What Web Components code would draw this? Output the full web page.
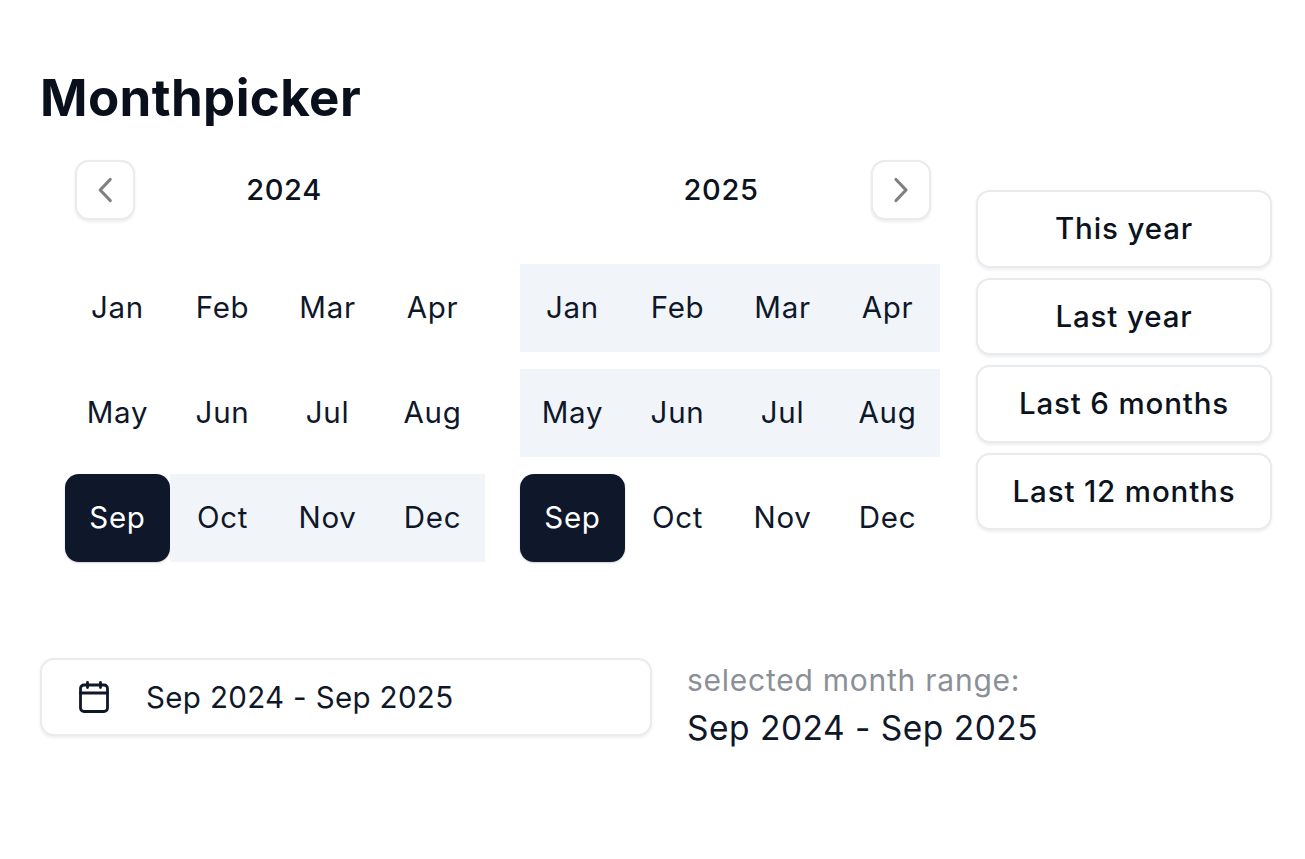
<!DOCTYPE html>
<html lang="en">
<head>
<meta charset="utf-8">
<title>Monthpicker</title>
<style>
  html, body { margin: 0; background: #fff; }
  body { font-family: Inter, "Liberation Sans", sans-serif; color: #0f172a; }
</style>
</head>
<body>
<month-app></month-app>
<script>
const FONT = 'Inter, "Liberation Sans", sans-serif';

class MonthCell extends HTMLElement {
  constructor() {
    super();
    this.attachShadow({ mode: 'open' }).innerHTML = `
      <style>
        :host { display: flex; align-items: center; justify-content: center; height: 87.5px; box-sizing: border-box; padding-top: .5px;
                font: 380 29.5px/1 ${FONT}; letter-spacing: .7px; color: #0f172a; }
        :host([range]) { background: #f1f5f9; }
        :host([selected]) { background: #0f172a; color: #fff; border-radius: 14px;
                box-shadow: 0 1px 2px rgba(15,23,42,.2); }
      </style><slot></slot>`;
  }
}
customElements.define('month-cell', MonthCell);

class NavButton extends HTMLElement {
  constructor() {
    super();
    const d = this.getAttribute('dir') === 'next' ? 'M25 19.500 35 30 25 40.500' : 'M35.200 19.500 25.200 30 35.200 40.500';
    this.attachShadow({ mode: 'open' }).innerHTML = `
      <style>
        :host { display: block; width: 60px; height: 60px; box-sizing: border-box; background: #fff;
                border: 2px solid #e9ebee; border-radius: 14px;
                box-shadow: 0 1.75px 3px rgba(15,23,42,.08); position: relative; }
        svg { position: absolute; inset: -2px; width: 60px; height: 60px; }
      </style>
      <svg viewBox="0 0 60 60" fill="none" stroke="#808080" stroke-width="3.2" stroke-linecap="round" stroke-linejoin="round"><path d="${d}"/></svg>`;
  }
}
customElements.define('nav-button', NavButton);

class YearPanel extends HTMLElement {
  constructor() {
    super();
    const year = this.getAttribute('year');
    const side = this.getAttribute('side');
    const months = ['Jan','Feb','Mar','Apr','May','Jun','Jul','Aug','Sep','Oct','Nov','Dec'];
    const range = (this.getAttribute('range') || '').split(',').filter(Boolean);
    const sel = this.getAttribute('selected');
    const cells = months.map(m => {
      const a = m === sel ? 'selected' : range.includes(m) ? 'range' : '';
      return `<month-cell ${a}>${m}</month-cell>`;
    }).join('');
    const btn = `<nav-button dir="${side === 'left' ? 'prev' : 'next'}"></nav-button>`;
    const sp = '<span class="spacer"></span>';
    this.attachShadow({ mode: 'open' }).innerHTML = `
      <style>
        :host { display: block; width: 420px; }
        header { display: flex; align-items: center; padding: 0 ${side === 'left' ? '10px' : '9px'}; height: 60px; margin-bottom: 44px; }
        .spacer { width: 42px; flex: none; }
        nav-button { flex: none; }
        h2 { flex: 1; margin: 0 0 2px; text-align: center; font: 470 29px/1 ${FONT}; letter-spacing: .65px; color: #0b1220; }
        .grid { display: grid; grid-template-columns: repeat(4, 105px); grid-auto-rows: 87.5px; row-gap: 17.5px; }
      </style>
      <header>${side === 'left' ? btn : sp}<h2>${year}</h2>${side === 'left' ? sp : btn}</header>
      <div class="grid">${cells}</div>`;
  }
}
customElements.define('year-panel', YearPanel);

class PresetButton extends HTMLElement {
  constructor() {
    super();
    this.attachShadow({ mode: 'open' }).innerHTML = `
      <style>
        :host { display: flex; align-items: center; justify-content: center; box-sizing: border-box; height: 77.5px;
                background: #fff; border: 2px solid #e9ebee; border-radius: 14px;
                box-shadow: 0 1.75px 3px rgba(15,23,42,.07);
                font: 450 29.5px/1 ${FONT}; letter-spacing: .85px; color: #0b1220; }
      </style><slot></slot>`;
  }
}
customElements.define('preset-button', PresetButton);

class RangeInput extends HTMLElement {
  constructor() {
    super();
    this.attachShadow({ mode: 'open' }).innerHTML = `
      <style>
        :host { display: flex; align-items: center; box-sizing: border-box; width: 612px; height: 77.5px; flex: none;
                background: #fff; border: 2px solid #e9ebee; border-radius: 14px;
                box-shadow: 0 1.75px 3px rgba(15,23,42,.07); padding-left: 37px; gap: 37px;
                font: 380 29.5px/1 ${FONT}; letter-spacing: .35px; color: #0f172a; }
        svg { width: 30px; height: 32px; flex: none; }
        .t { padding-top: 2px; }
      </style>
      <svg viewBox="0 0 30 32" fill="none" stroke="#0f172a" stroke-width="2.8" stroke-linecap="round" stroke-linejoin="round">
        <rect x="1.500" y="4" width="27" height="26.500" rx="3.500"/><path d="M1.500 12H28.500M8.500 1.500V6.500M21.500 1.500V6.500"/>
      </svg><span class="t"><slot></slot></span>`;
  }
}
customElements.define('range-input', RangeInput);

class MonthApp extends HTMLElement {
  constructor() {
    super();
    this.attachShadow({ mode: 'open' }).innerHTML = `
      <style>
        :host { display: block; padding: 66px 0 0 40px; }
        h1 { margin: 0 0 31px; font: 700 51px/63px ${FONT}; color: #0a0f1c; letter-spacing: .4px; }
        .top { display: flex; align-items: center; gap: 36px; padding-left: 25px; }
        .cal { display: flex; gap: 35px; }
        .presets { display: flex; flex-direction: column; gap: 10px; width: 296px; margin-bottom: 1px; }
        .bottom { display: flex; align-items: flex-start; gap: 35px; margin-top: 96.5px; }
        .label { font: 380 30px/42px ${FONT}; letter-spacing: .75px; color: #8b8f97; margin-top: 1px; }
        .value { font: 380 33.5px/49px ${FONT}; letter-spacing: .5px; color: #0f172a; margin-top: 3px; }
      </style>
      <h1>Monthpicker</h1>
      <div class="top">
        <div class="cal">
          <year-panel year="2024" side="left" selected="Sep" range="Oct,Nov,Dec"></year-panel>
          <year-panel year="2025" side="right" selected="Sep" range="Jan,Feb,Mar,Apr,May,Jun,Jul,Aug"></year-panel>
        </div>
        <div class="presets">
          <preset-button>This year</preset-button>
          <preset-button>Last year</preset-button>
          <preset-button>Last 6 months</preset-button>
          <preset-button>Last 12 months</preset-button>
        </div>
      </div>
      <div class="bottom">
        <range-input>Sep 2024 - Sep 2025</range-input>
        <div>
          <div class="label">selected month range:</div>
          <div class="value">Sep 2024 - Sep 2025</div>
        </div>
      </div>`;
  }
}
customElements.define('month-app', MonthApp);
</script>
</body>
</html>
